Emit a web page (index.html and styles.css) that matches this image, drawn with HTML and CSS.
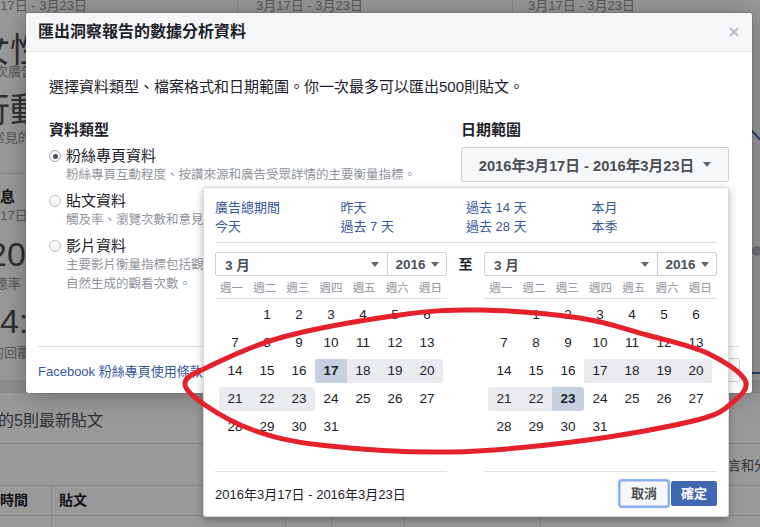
FILE: index.html
```html
<!DOCTYPE html>
<html lang="zh-Hant">
<head>
<meta charset="utf-8">
<title>匯出洞察報告的數據分析資料</title>
<link rel="stylesheet" href="styles.css">
</head>
<body>
<div class="page">
  <div class="cards">
    <div class="card c1">
      <div class="date d1">3月17日 - 3月23日</div>
      <div class="big b1">女性</div>
      <div class="small s1">次廣告</div>
      <div class="big b2">行動</div>
      <div class="small s2">最常見的</div>
      <div class="sep"></div>
      <div class="bh h1">訊息</div>
      <div class="small s3">3月17日</div>
      <div class="big b3">200</div>
      <div class="small s4">回應率 <span class="up">▲</span></div>
      <div class="big b4">14:2</div>
      <div class="small s5">的回覆</div>
    </div>
    <div class="card c2">
      <div class="date">3月17日 - 3月23日</div>
    </div>
    <div class="card c3">
      <div class="date d3">3月17日 - 3月23日</div>
      <svg class="chart" width="247" height="360" viewBox="0 0 247 360">
        <path d="M190 86 C215 96 232 100 247 120" fill="none" stroke="#4267b2" stroke-width="2"/>
        <circle cx="244" cy="231" r="5" fill="#bec2c9"/>
        <path d="M200 353 H247" stroke="#4267b2" stroke-width="2"/>
      </svg>
    </div>
  </div>
  <div class="band"></div>
  <div class="posts">
    <div class="pt">的5則最新貼文</div>
    <div class="prow">留言和分享</div>
    <div class="ptable phead">
      <div class="pc first">時間</div>
      <div class="pc">貼文</div>
      <div class="pc"></div>
      <div class="pc"></div>
      <div class="pc"></div>
      <div class="pc last"></div>
    </div>
    <div class="ptable pbody">
      <div class="pc"></div><div class="pc"></div><div class="pc"></div>
      <div class="pc"></div><div class="pc"></div><div class="pc last"></div>
    </div>
  </div>
</div>

<div class="overlay"></div>

<div class="modal">
  <div class="mh">
    <div class="mt">匯出洞察報告的數據分析資料</div>
    <svg class="close" width="10" height="10" viewBox="0 0 10 10"><path d="M1 1 L9 9 M9 1 L1 9" stroke="#bcc0c6" stroke-width="2"/></svg>
  </div>
  <div class="mb">
    <div class="intro">選擇資料類型、檔案格式和日期範圍。你一次最多可以匯出500則貼文。</div>
    <div class="cols">
      <div class="typecol">
        <div class="h">資料類型</div>
        <div class="opt">
          <span class="radio on"></span>
          <div class="lbl">粉絲專頁資料</div>
          <div class="desc">粉絲專頁互動程度、按讚來源和廣告受眾詳情的主要衡量指標。</div>
        </div>
        <div class="opt">
          <span class="radio"></span>
          <div class="lbl">貼文資料</div>
          <div class="desc">觸及率、瀏覽次數和意見回饋等貼文的主要衡量指標。</div>
        </div>
        <div class="opt">
          <span class="radio"></span>
          <div class="lbl">影片資料</div>
          <div class="desc">主要影片衡量指標包括觀看次數、觀看時間和付費與<br>自然生成的觀看次數。</div>
        </div>
      </div>
      <div class="datecol">
        <div class="h">日期範圍</div>
        <div class="datebtn"><span>2016年3月17日 - 2016年3月23日</span><span class="caret"></span></div>

        <div class="popup">
          <div class="presets">
            <span>廣告總期間</span><span>昨天</span><span>過去 14 天</span><span>本月</span>
            <span>今天</span><span>過去 7 天</span><span>過去 28 天</span><span>本季</span>
          </div>
          <div class="psep"></div>
          <div class="calrow">
            <div class="cal">
              <div class="sel"><div class="m"><span>3 月</span><span class="caret"></span></div><div class="y"><span>2016</span><span class="caret"></span></div></div>
              <div class="wk"><span>週一</span><span>週二</span><span>週三</span><span>週四</span><span>週五</span><span>週六</span><span>週日</span></div>
              <div class="days">
                <span></span><span>1</span><span>2</span><span>3</span><span>4</span><span>5</span><span>6</span>
                <span>7</span><span>8</span><span>9</span><span>10</span><span>11</span><span>12</span><span>13</span>
                <span>14</span><span>15</span><span>16</span><span class="rg st pick">17</span><span class="rg">18</span><span class="rg">19</span><span class="rg en">20</span>
                <span class="rg st">21</span><span class="rg">22</span><span class="rg en">23</span><span>24</span><span>25</span><span>26</span><span>27</span>
                <span>28</span><span>29</span><span>30</span><span>31</span>
              </div>
            </div>
            <div class="to">至</div>
            <div class="cal r">
              <div class="sel"><div class="m"><span>3 月</span><span class="caret"></span></div><div class="y"><span>2016</span><span class="caret"></span></div></div>
              <div class="wk"><span>週一</span><span>週二</span><span>週三</span><span>週四</span><span>週五</span><span>週六</span><span>週日</span></div>
              <div class="days">
                <span></span><span>1</span><span>2</span><span>3</span><span>4</span><span>5</span><span>6</span>
                <span>7</span><span>8</span><span>9</span><span>10</span><span>11</span><span>12</span><span>13</span>
                <span>14</span><span>15</span><span>16</span><span class="rg st">17</span><span class="rg">18</span><span class="rg">19</span><span class="rg en">20</span>
                <span class="rg st">21</span><span class="rg">22</span><span class="rg en pick">23</span><span>24</span><span>25</span><span>26</span><span>27</span>
                <span>28</span><span>29</span><span>30</span><span>31</span>
              </div>
            </div>
          </div>
          <div class="pfoot">
            <span class="ptxt">2016年3月17日 - 2016年3月23日</span>
            <span class="btn cancel">取消</span>
            <span class="btn ok">確定</span>
          </div>
        </div>
      </div>
    </div>
  </div>
  <div class="mf">
    <span class="link">Facebook 粉絲專頁使用條款</span>
    <div class="mbtns"><span class="mbtn">取消</span><span class="mbtn">匯出數據</span></div>
  </div>
</div>

<svg class="scribble" width="760" height="527" viewBox="0 0 760 527">
  <path d="M185 383 C185.8 376.5 193.7 373.7 210 366 C226.3 358.3 251.3 345.5 283 337 C314.7 328.5 367.2 319.5 400 315 C432.8 310.5 450 309.5 480 310 C510 310.5 552.2 313.8 580 318 C607.8 322.2 625.8 329.2 647 335 C668.2 340.8 690.7 345.5 707 353 C723.3 360.5 740.7 371.8 745 380 C749.3 388.2 741 395.3 733 402 C725 408.7 722.5 413.5 697 420 C671.5 426.5 621.2 435.7 580 441 C538.8 446.3 493.3 451.3 450 452 C406.7 452.7 352.8 448.7 320 445 C287.2 441.3 272.2 436.7 253 430 C233.8 423.3 216.3 412.8 205 405 C193.7 397.2 184.2 389.5 185 383 Z" fill="none" stroke="#e5212b" stroke-width="5" stroke-linejoin="round"/>
</svg>
</body>
</html>
```

FILE: styles.css
```css
* { box-sizing: border-box; }

body {
  margin: 0;
  width: 760px;
  height: 527px;
  overflow: hidden;
  position: relative;
  background: #e9ebee;
  font-family: "Liberation Sans", "Noto Sans CJK TC", sans-serif;
  color: #1d2129;
}

/* ---------- background page ---------- */
.cards { display: flex; height: 380px; }
.card { background: #fff; overflow: hidden; }
.c1 { width: 238px; border-right: 1px solid #dddfe2; display: flex; flex-direction: column; }
.c2 { width: 275px; border-right: 1px solid #dddfe2; padding-left: 18px; }
.c3 { flex: 1; }
.c1 > div { white-space: nowrap; }

.date { font-size: 13px; line-height: 14px; margin-top: -1px; color: #90949c; white-space: nowrap; }
.d1 { margin-left: -20px; }
.d3 { margin-left: 15px; }
.chart { display: block; margin-top: 7px; }

.big { font-size: 34px; line-height: 34px; color: #4b4f56; }
.small { font-size: 13px; line-height: 16px; color: #90949c; }
.bh { font-size: 15px; line-height: 18px; font-weight: bold; color: #1d2129; }
.sep { height: 1px; background: #dddfe2; margin-top: 27px; }

.b1 { margin-top: 20px; margin-left: -24px; }
.s1 { margin-top: -3px; margin-left: -5px; }
.b2 { margin-top: 13px; margin-left: -24px; }
.s2 { margin-top: 3px; margin-left: -21px; }
.h1 { margin-top: 14px; margin-left: -15px; }
.s3 { margin-top: 2px; margin-left: -20px; }
.b3 { margin-top: 13px; margin-left: -12px; }
.s4 { margin-top: 5px; margin-left: -18px; }
.b4 { margin-top: 11px; margin-left: -19px; }
.s5 { margin-top: 7px; margin-left: -9px; }
.up { color: #42b72a; font-size: 9px; }

.band { height: 13px; }
.posts { background: #fff; height: 134px; }
.pt { height: 51px; border-bottom: 1px solid #dddfe2; font-size: 16px; line-height: 22px; padding-top: 17px; text-indent: -2px; color: #4b4f56; white-space: nowrap; }
.prow { height: 42px; border-bottom: 1px solid #dddfe2; display: flex; align-items: center; padding-left: 715px; font-size: 13px; color: #4b4f56; white-space: nowrap; overflow: hidden; }
.ptable { display: grid; grid-template-columns: 52px 234px 46px 73px 136px 1fr; }
.phead { height: 30px; border-bottom: 1px solid #dddfe2; }
.pbody { height: 20px; }
.pc { border-right: 1px solid #dddfe2; font-size: 14px; font-weight: bold; line-height: 29px; padding-left: 7px; color: #1d2129; }
.pc.first { padding-left: 0; }
.pc.last { border-right: none; }

.overlay { position: absolute; inset: 0; background: rgba(0, 0, 0, 0.4); }

/* ---------- modal ---------- */
.modal {
  position: absolute;
  left: 26px;
  top: 13px;
  width: 726px;
  height: 380px;
  background: #fff;
  border-radius: 3px;
  box-shadow: 0 2px 26px rgba(0, 0, 0, 0.3), 0 0 0 1px rgba(0, 0, 0, 0.1);
  display: flex;
  flex-direction: column;
}
.mh {
  height: 39px;
  background: #f5f6f7;
  border-bottom: 1px solid #e5e5e5;
  border-radius: 3px 3px 0 0;
  display: flex;
  align-items: center;
  justify-content: space-between;
  padding: 0 13px 0 12px;
}
.mt { font-size: 16px; font-weight: bold; line-height: 20px; color: #1d2129; }
.close { display: block; }

.mb { flex: 1; padding: 25px 23px 0; }
.intro { font-size: 15px; line-height: 20px; color: #1d2129; white-space: nowrap; }
.cols { display: flex; margin-top: 23px; }
.typecol { width: 412px; }
.h { font-size: 15px; font-weight: bold; line-height: 20px; color: #1d2129; }

.opt { display: grid; grid-template-columns: 12px 1fr; column-gap: 5px; margin-top: 6px; }
.radio {
  grid-row: 1;
  align-self: center;
  width: 12px;
  height: 12px;
  border-radius: 50%;
  border: 1px solid #bec3c9;
  background: linear-gradient(#fff, #eceef1);
  position: relative;
}
.radio.on { border-color: #a2a7ad; background: #f5f6f7; }
.radio.on::after {
  content: "";
  position: absolute;
  left: 2.5px;
  top: 2.5px;
  width: 5px;
  height: 5px;
  border-radius: 50%;
  background: #4b4f56;
}
.lbl { grid-column: 2; font-size: 15px; line-height: 20px; color: #1d2129; }
.desc { grid-column: 2; font-size: 12.5px; line-height: 19px; color: #90949c; white-space: nowrap; }

.datecol { flex: 1; position: relative; }
.datebtn {
  margin-top: 7px;
  height: 35px;
  border: 1px solid #ced0d4;
  border-radius: 2px;
  background: #f6f7f9;
  display: flex;
  align-items: center;
  justify-content: center;
  gap: 9px;
  font-weight: bold;
  font-size: 14.7px;
  color: #4b4f56;
  white-space: nowrap;
}
.caret {
  display: inline-block;
  width: 0;
  height: 0;
  border-left: 4px solid transparent;
  border-right: 4px solid transparent;
  border-top: 5px solid #606770;
}

.mf {
  height: 47px;
  margin: 0 12px;
  border-top: 1px solid #dddfe2;
  display: flex;
  align-items: center;
  justify-content: space-between;
}
.link { font-size: 13px; color: #365899; white-space: nowrap; }
.mbtns { display: flex; gap: 4px; }
.mbtn {
  height: 24px;
  line-height: 22px;
  padding: 0 10px;
  border: 1px solid #ced0d4;
  border-radius: 2px;
  background: #f6f7f9;
  font-size: 12px;
  font-weight: bold;
  color: #4b4f56;
}

/* ---------- date popup ---------- */
.popup {
  position: absolute;
  right: 0;
  top: 67px;
  width: 526px;
  background: #fff;
  border: 1px solid rgba(0, 0, 0, 0.15);
  border-radius: 3px;
  box-shadow: 0 3px 8px rgba(0, 0, 0, 0.3);
  padding: 10px 11px 10px;
  z-index: 2;
}
.presets { display: grid; grid-template-columns: repeat(4, 1fr); font-size: 13px; line-height: 19px; color: #365899; }
.psep { margin-top: 6px; border-top: 1px solid #dddfe2; }
.calrow { display: flex; margin-top: 9px; }
.cal { width: 232px; border-bottom: 1px solid #dddfe2; padding-bottom: 4px; }
.cal.r { width: 233px; }
.to { flex: 1; text-align: center; font-weight: bold; font-size: 14px; line-height: 24px; color: #1d2129; }

.sel { display: flex; height: 24px; border: 1px solid #ccd0d5; border-radius: 2px; background: #fff; }
.sel .m {
  flex: 1;
  display: flex;
  align-items: center;
  justify-content: space-between;
  padding: 0 8px 0 9px;
  border-right: 1px solid #ccd0d5;
}
.sel .y { width: 58px; display: flex; align-items: center; justify-content: center; gap: 5px; }
.sel span { font-weight: bold; font-size: 13.5px; color: #4b4f56; }
.sel .caret { border-top-color: #606770; }

.wk {
  display: grid;
  grid-template-columns: repeat(7, 1fr);
  height: 21px;
  margin-top: 2px;
  border-bottom: 1px solid #dddfe2;
  font-size: 11.5px;
  line-height: 20px;
  color: #90949c;
  text-align: center;
  white-space: nowrap;
}
.days {
  display: grid;
  grid-template-columns: repeat(7, 32px);
  grid-template-rows: repeat(6, 24px);
  row-gap: 4px;
  margin: 4px 4px 0;
}
.days span { font-size: 13.5px; line-height: 24px; text-align: center; color: #1d2129; }
.days .rg { background: #e9ebee; }
.days .st { border-radius: 3px 0 0 3px; }
.days .en { border-radius: 0 3px 3px 0; }
.days .pick { background: #c7d0e1; font-weight: bold; }

.pfoot { display: flex; align-items: center; margin-top: 9px; height: 25px; }
.ptxt { flex: 1; font-size: 13px; color: #1d2129; white-space: nowrap; }
.btn {
  height: 25px;
  line-height: 23px;
  border-radius: 2px;
  font-size: 13px;
  font-weight: bold;
  text-align: center;
}
.cancel {
  width: 48px;
  border: 1px solid #ced0d4;
  background: #f6f7f9;
  color: #4b4f56;
  box-shadow: 0 0 1px 2px rgba(88, 144, 255, 0.75);
}
.ok {
  width: 46px;
  margin-left: 3px;
  border: 1px solid #4267b2;
  background: #4267b2;
  color: #fff;
}

.scribble { position: absolute; left: 0; top: 0; pointer-events: none; z-index: 5; }
```
